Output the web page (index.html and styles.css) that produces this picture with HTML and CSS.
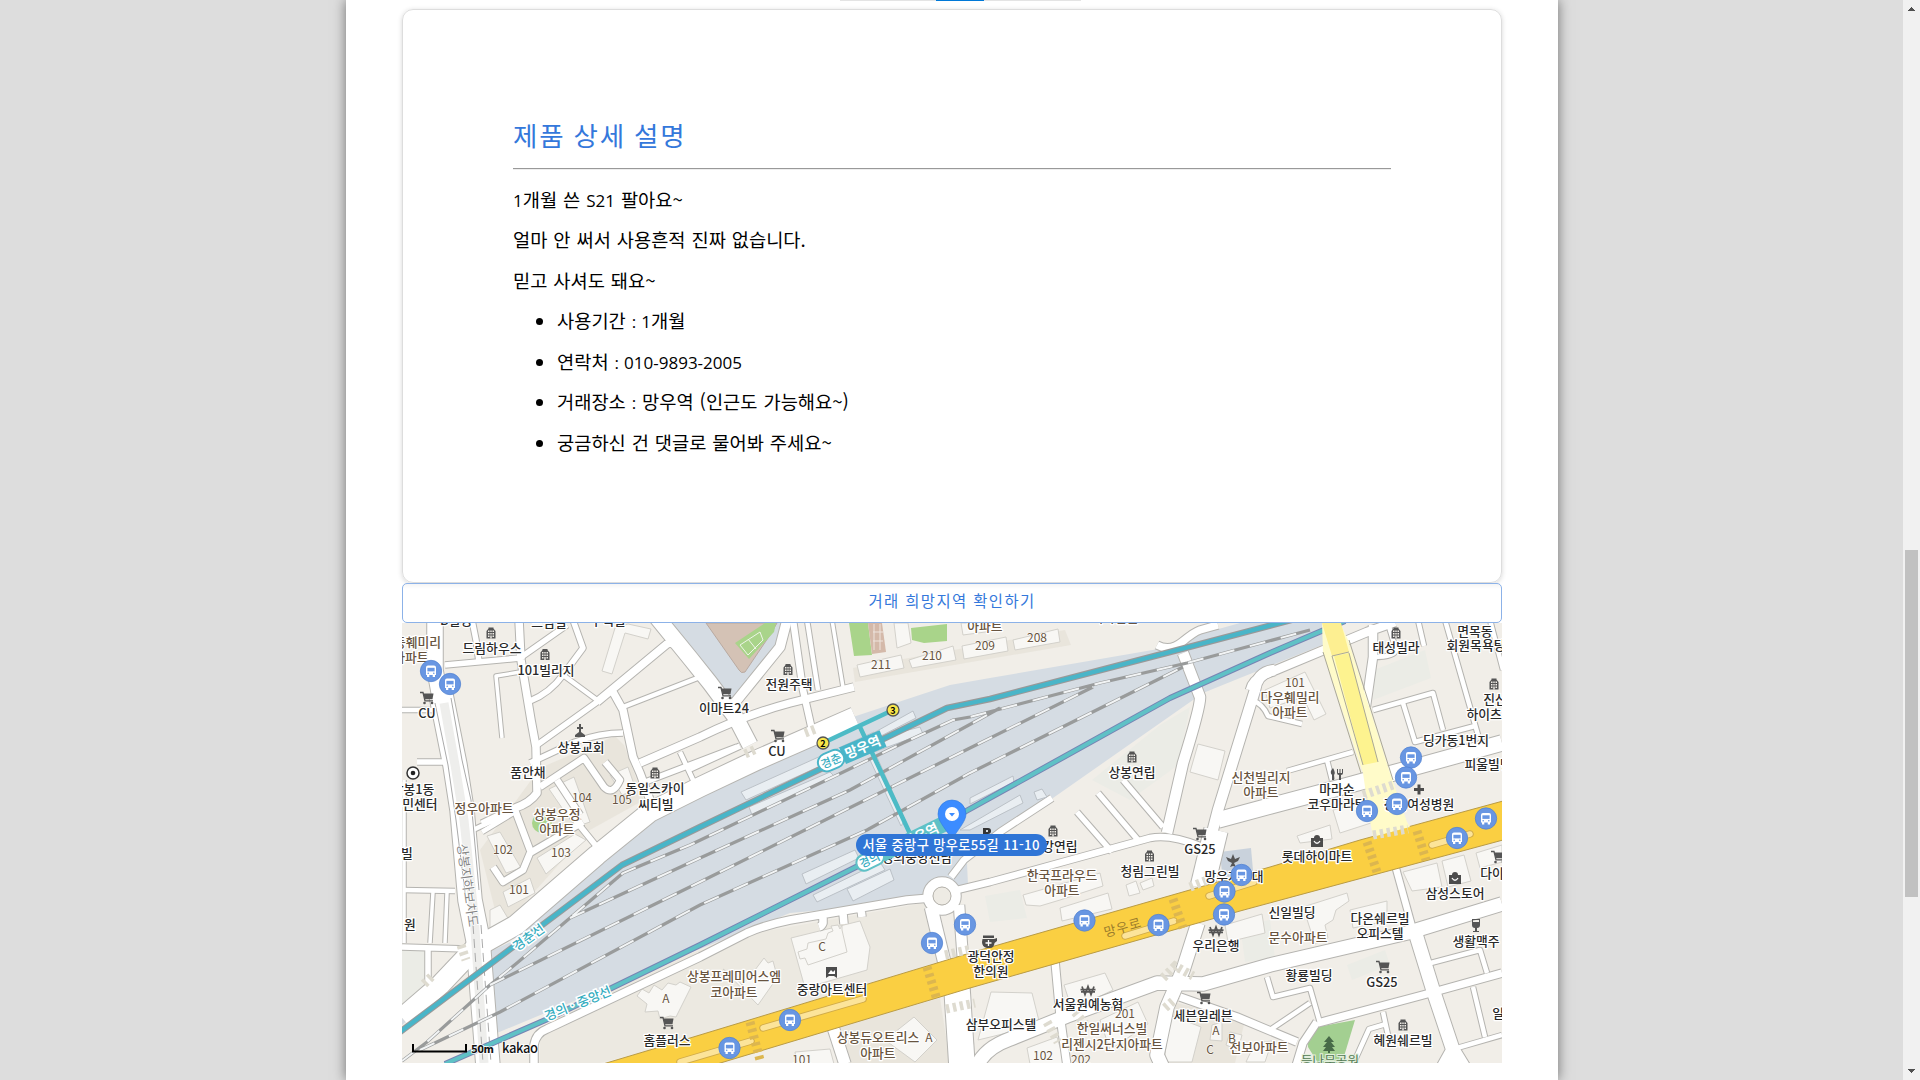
FILE: index.html
```html
<!DOCTYPE html>
<html lang="ko">
<head>
<meta charset="utf-8">
<title>제품 상세 설명</title>
<link rel="stylesheet" href="styles.css">
</head>
<body>
<div class="viewport">
<main class="page">
  <div class="tabs"><span class="tab-active"></span></div>
  <section class="card">
    <h2>제품 상세 설명</h2>
    <hr>
    <p><span class="num">1</span>개월 쓴 <span class="num">S21</span> 팔아요~</p>
    <p>얼마 안 써서 사용흔적 진짜 없습니다.</p>
    <p>믿고 사셔도 돼요~</p>
    <ul>
      <li>사용기간 <span class="num">: 1</span>개월</li>
      <li>연락처 <span class="num">: 010-9893-2005</span></li>
      <li>거래장소 <span class="num">:</span> 망우역 (인근도 가능해요~)</li>
      <li>궁금하신 건 댓글로 물어봐 주세요~</li>
    </ul>
  </section>
  <button class="area-btn" type="button">거래 희망지역 확인하기</button>
  <svg class="map" viewBox="402 623 1100 440" width="1100" height="440">
    <defs>
      <symbol id="bus" viewBox="-12 -12 24 24" overflow="visible">
        <circle r="10.7" fill="#6896e2" stroke="#4f7fd0" stroke-width=".7"/>
        <path d="M-5 4V-3.5Q-5-5.5-3-5.5H3Q5-5.5 5-3.5V4ZM-4 4h2.3v2H-4ZM1.7 4H4v2H1.7Z" fill="#fff"/>
        <path d="M-3.6-3.2h7.2v3.6h-7.2Z" fill="#6896e2"/><circle cx="-2.8" cy="2.2" r=".8" fill="#6896e2"/><circle cx="2.8" cy="2.2" r=".8" fill="#6896e2"/>
      </symbol>
      <symbol id="bld" viewBox="-6 -6 12 12" overflow="visible">
        <path d="M-4.5 5.5V-2L-2.5-4.5V-5.5H2.5V-4.5L4.500-2V5.500Z" fill="#555"/>
        <path d="M-3-2.500h1.500v1.500H-3ZM-.7-2.500H.7V-1H-.7ZM1.500-2.500H3V-1H1.500ZM-3 0h1.500v1.500H-3ZM-.7 0H.7v1.500H-.7ZM1.500 0H3v1.500H1.500ZM-3 2.500h1.500V4H-3ZM-.7 2.500H.7v3H-.7ZM1.500 2.500H3V4H1.500Z" fill="#f1eee8"/>
      </symbol>
      <symbol id="cart" viewBox="-7 -7 14 14" overflow="visible">
        <path d="M-7-5.500h3L-2 2.800H6" fill="none" stroke="#555" stroke-width="1.300"/>
        <path d="M-3.800-4.500H6.500L5.500 1.200H-2.300Z" fill="#555"/><circle cx="-2.500" cy="5" r="1.300" fill="#555"/><circle cx="5" cy="5" r="1.300" fill="#555"/>
      </symbol>
      <symbol id="bag" viewBox="-6 -6 12 12" overflow="visible">
        <path d="M-6-3H6V6H-6ZM-3-3Q-3-6 0-6T3-3" fill="#4c4c4c"/><path d="M-3 0Q0 4.500 3 0" fill="none" stroke="#fff" stroke-width="1.300"/>
      </symbol>
      <symbol id="won" viewBox="-7 -5 14 10" overflow="visible">
        <path d="M-6-4L-3 4L0-4L3 4L6-4M-7.500-.8H7.500M-7 1.300H7" fill="none" stroke="#555" stroke-width="1.700"/>
      </symbol>
      <g id="streets" class="streets">
        <path class="w16" d="M435 618V670L440 697"/>
        <path class="w24" d="M441 695L455 765L462 810L470 900L478 940L488 1066"/>
        <path class="w6" d="M472 620L476 640L479 662"/>
        <path class="w8" d="M519 620L521 660L531 720L536 747L537 793Q530 803 515 808L482 824"/>
        <path class="w6" d="M445 665L520 658L567 625M573 620L583 648L563 675Q550 693 530 701M537 745L597 702L667 643M530 763L575 742Q600 733 623 733"/>
        <path class="w5" d="M563 675L597 700M623 707L700 677M680 752L694 782M402 710H438M482 832L515 812M403 890L455 891M473 830L515 810"/>
        <path class="w8" d="M597 702L667 644Q675 640 682 654M613 692L623 710L633 757L640 773L650 800M640 763L700 737Q745 715 790 703L854 687"/>
        <path class="w6" d="M640 784L737 747M417 762H443M690 769L740 746M402 947L467 949M428 950V985M567 810L597 847"/>
        <path class="w4" d="M502 738L496 676L520 672M433 892L430 943M447 893L445 943M404 780V943M832 620L843 687"/>
        <path class="w7" d="M493 867L503 882L523 870L530 853L583 822M515 810L530 850M540 787L584 758L604 787Q613 796 620 780L605 762M557 780L580 815"/>
        <path class="w20" d="M402 1018L440 985L475 948L516 925L597 855L650 812L700 787L757 760L855 717"/>
        <path class="w16" d="M655 615L690 658L710 683L736 718L750 745"/>
        <path class="w10" d="M787 620L780 647L733 705"/>
        <path class="w7" d="M793 620L803 690L812 730"/>
        <path class="w5" d="M807 620L818 690"/>
        <path class="w8" d="M534 1064V1045Q536 1033 547 1029L700 957L747 933Q765 925 790 920L907 900L930 898M823 915V923Q822 926 819 927M843 913L844 924M861 909L862 917"/>
        <path class="w13" d="M931 907L945 965"/><path class="w11" d="M959 905L963 960"/>
        <path class="w7" d="M957 890L990 882L1070 860L1150 838Q1170 834 1200 846M951 877L964 860L1000 832L1052 798"/>
        <path class="w12" d="M833 1027L845 1064"/><path class="w26" d="M957 989L962 1066"/>
        <path class="w8" d="M1055 961L1060 1015L1067 1066"/>
        <path class="w14" d="M977 1066Q985 1048 1010 1039L1067 1016L1157 983L1203 984L1270 965L1407 933L1502 904M1198 923L1183 970L1167 1007L1157 1055L1162 1066"/>
        <path class="w8" d="M1180 997L1237 1017L1297 1042M1157 645Q1170 652 1182 642T1200 630L1218 625"/>
        <path class="w24" d="M1216 830L1202 888"/>
        <path class="w11" d="M1183 653L1200 697Q1201 705 1183 763L1167 833M1275 670Q1257 672 1255 690L1218 810L1209 845"/>
        <path class="w16" d="M1218 820L1270 806L1353 784L1393 773L1502 743"/>
        <path class="w9" d="M1250 690Q1252 680 1264 675L1367 632L1395 622M1373 625V657L1366 706"/>
        <path class="w6" d="M1077 812L1112 852M1098 793L1138 840M1123 780L1163 827"/>
        <path class="w5" d="M1373 657Q1395 657 1396 650L1387 620M1418 620L1424 646M1445 620L1478 735M1373 710L1433 693L1443 730M1403 703L1415 742L1475 726M1490 620L1503 670M1252 700Q1263 704 1268 716L1302 724M1287 771L1353 752M1327 760L1332 780"/>
        <path class="w7" d="M1395 865L1413 930"/><path class="w14" d="M1413 925L1433 990L1453 1050L1443 1068M1453 1050L1464 1068"/>
        <path class="w5" d="M1267 977L1273 997L1310 988L1320 1023M1270 1030L1310 1003M1383 1012L1389 1040M1386 1024L1369 1029L1355 1060M1427 964L1480 950L1487 973M1473 987L1485 1037M1457 1048L1502 1035"/>
        <path class="w8" d="M1318 1023L1423 995L1502 973M1317 1022L1303 1043L1296 1066"/>
        <circle class="w10" cx="942" cy="896" r="14"/>
      </g>
      <g id="rails"><path d="M402 1061L427 1042L490 985L517 963L623 873L690 845L833 777L903 743L953 720L970 717L1100 683L1187 663L1310 630M570 918L700 858L850 790L1000 708M490 985L700 882L805 830L970 748L1093 687M420 1050L500 1012L700 905L867 830L970 773L1183 667"/></g>
    </defs>
    <rect x="402" y="623" width="1100" height="440" fill="#f1eee8"/>
    <g fill="#ebece6"><path d="M1374 670L1425 650L1431 678L1373 700ZM1092 780L1160 725L1190 707L1178 765L1130 800ZM1240 925L1270 920L1275 958L1245 962ZM1347 965L1385 950L1390 965L1352 980ZM402 950L425 950L425 985L402 1010ZM985 896L1020 890L1027 918L990 922Z"/></g>
    <g fill="#e5e1d8"><path d="M540 768L615 736L624 745L644 800L590 830L500 930L480 850ZM853 668L1065 630L1071 645L855 682ZM835 1028L940 998L950 1063H848ZM1165 1000L1245 1020L1235 1063H1165Z" opacity=".75"/></g>
    <path d="M590 984L760 932L930 902L945 960L690 1040L600 1063H540V1035Z" fill="#ece9e1"/>
    <path d="M402 1016L437 985L467 950L487 953L515 940L552 907L600 863L648 822L700 798L740 777L787 758L853 717L950 685L990 678L1170 647L1190 637L1240 623H1340L1327 643L1240 678L1203 693L1053 798L1000 833L967 863L968 885L913 902L790 913L690 953L497 1033L487 953L402 1025Z" fill="#d5dce3"/>
    <path d="M657 623H787L773 655L730 715Z" fill="#d5dce3"/>
    <path d="M706 623H777L770 635L745 672Q741 674 739 670Z" fill="#d4c2b5" stroke="#b8a9a0"/>
    <path d="M735 643L765 623H776L774 632L749 659Z" fill="#a9d48a"/><path d="M740 645L760 632L763 640L748 655ZM748 639L756 649" fill="none" stroke="#eff5e9"/>
    <path d="M849 623H868L872 655L854 656ZM911 628L947 624V641L924 643L912 640Z" fill="#a9d48a"/>
    <path d="M868 623H882L886 652L872 654Z" fill="#d4b9a9"/><path d="M874 624V650M880 624V650M873 632H883M873 641H883" stroke="#eee4dd"/>
    <g class="building">
      <path d="M857 665L901 655L904 668L860 677ZM909 660L953 646L956 660L912 668ZM962 646L1006 637L1008 651L964 659ZM1013 640L1058 629L1060 642L1015 650Z"/>
      <path d="M615 628L628 624L651 629L648 639L625 633L612 674L602 671ZM961 623H1000V630L963 635ZM894 623H908L911 643L897 648Z"/>
      <path d="M549 789L574 777L590 822L575 827ZM610 775L628 767L636 790L622 795ZM487 836L500 832L521 868L506 873ZM503 892L530 878L535 893L508 907ZM537 858L575 834L586 840L546 874ZM490 910L500 905L509 920L490 928Z"/>
      <path d="M791 938L860 921L870 947L867 970L805 988Z"/>
      <path d="M798 952L807 949L808 943L826 939L828 933L833 931L831 926L838 925L840 929L842 925V930L847 952L808 965L805 958L800 959Z"/>
      <path d="M637 996L642 989L649 993L654 985L662 990L668 983L676 985L680 982L691 987L676 1017L670 1016L660 1019L658 1011L645 1012L647 1004Z"/>
      <path d="M723 969L735 977L742 985L755 970L764 958L768 963L773 961L776 972L779 975L758 1005Z"/>
      <path d="M885 1040L914 1017L937 1040L915 1062ZM795 1052L830 1049L834 1064H797ZM978 1040L991 992L1032 993L1040 1025ZM1064 985L1105 973L1113 990L1072 1010ZM1027 1048L1057 1037L1065 1064H1030ZM1100 1020L1138 1002L1148 1024L1110 1050Z"/>
      <path d="M1023 895L1100 873L1103 886L1060 900L1040 906L1026 905ZM1060 908L1108 893L1112 909L1062 921ZM1126 885L1136 881L1140 893L1129 896ZM1140 883L1152 878L1154 886L1143 890ZM1198 744L1225 751L1218 780L1190 772Z"/>
      <path d="M1265 690L1305 672L1326 714L1314 720L1303 697L1270 708ZM1333 810L1363 803L1374 822L1340 833ZM1297 836L1330 825L1332 839L1300 843ZM1403 872L1437 863L1442 887L1412 891ZM1442 861L1464 855L1471 881L1448 887ZM1476 853L1502 845V862L1480 868ZM1303 907L1347 893L1349 901L1336 910L1333 920L1325 925L1328 938L1315 944ZM1225 925L1262 914L1265 933L1228 942ZM1350 910L1387 901V921L1353 928Z"/>
      <path d="M1170 1015L1201 1027L1192 1062H1164ZM1212 1025L1222 1022V1041L1210 1040ZM1230 1032L1242 1035L1238 1050L1226 1045ZM1255 1043L1272 1041L1265 1062H1246Z"/>
    </g>
    <circle cx="542" cy="823" r="10" fill="#a9d48a"/>
    <path d="M1308 1037L1317 1027L1355 1020L1342 1063H1318L1308 1047Z" fill="#a3cf91"/>
    <path d="M1220 852L1251 848L1254 882L1223 884Z" fill="#c9d2dc"/>
    <use href="#streets" class="street-edge"/><use href="#streets" class="street-fill"/>
    <circle cx="942" cy="896" r="9" fill="#eeebe4" stroke="#b8b5ae"/>
    <path d="M444 703L455 765L464 820L474 915L484 1063" fill="none" stroke="#eeeeec" stroke-width="9"/>
    <path d="M435 703L448 765L456 820L466 900M451 698L462 760L471 800L479 890" fill="none" stroke="#aaa"/>
    <path d="M473 925L483 1063M481 925L491 1063" fill="none" stroke="#aaa" stroke-dasharray="9 5"/>
    <g class="platform"><path d="M741 792L874 732L877 740L746 800ZM749 807L830 772L834 776L752 815ZM832 756L913 711L916 718L840 757ZM870 740L920 727L923 734L874 752ZM870 760L877 757L905 820L901 826ZM802 874L855 850L859 858L806 884ZM813 895L880 862L885 870L817 902ZM847 889L890 869L894 880L853 901ZM970 798L1013 776L1014 782L970 804ZM960 830L1020 795L1023 803L970 830ZM1034 792L1042 789L1047 797L1037 800Z"/></g>
    <use href="#rails" class="rail-base"/><use href="#rails" class="rail-dash"/>
    <g class="lines">
      <path d="M400 1032L622 865L700 827L877 742L947 708L990 699L1170 652L1295 619" stroke="#999" stroke-width="6.500"/>
      <path d="M400 1032L622 865L700 827L877 742L947 708L990 699L1170 652L1295 619" stroke="#49b5c8" stroke-width="4.300"/>
      <path d="M445 1064L550 1018L700 945L860 865L950 820L1170 698L1270 653L1345 621" stroke="#7784b4" stroke-width="6"/>
      <path d="M445 1064L550 1018L700 945L860 865L950 820L1170 698L1270 653L1345 621" stroke="#5fc1c6" stroke-width="4"/>
      <path d="M823 743L893 710M860 727L912 838" stroke="#4dbbc6" stroke-width="4.500"/>
    </g>
    <path d="M603 1064L690 1038L970 953L1270 867L1360 840L1503 801V840L1240 911L970 988L717 1064Z" fill="#facf42" stroke="#b99b45"/>
    <g fill="none" stroke-linecap="round" stroke="#d0ab49" stroke-width="7.500"><path d="M763 1028L863 999M680 1062L751 1041M1125 936L1174 921M1209 896L1254 882M1432 845L1470 834"/><g stroke="#fce49a" stroke-width="5.500"><path d="M763 1028L863 999M680 1062L751 1041M1125 936L1174 921M1209 896L1254 882M1432 845L1470 834"/></g></g>
    <path d="M1322 623H1340L1348 640L1390 773L1407 822L1410 827L1373 837L1369 815L1363 773L1323 652Z" fill="#fffbc9"/>
    <path d="M1322 623H1341L1349 652L1332 656Z" fill="#fdef91"/><path d="M1334 656L1349 653L1378 762L1363 765Z" fill="#fdf38f"/>
    <path d="M1323 652L1361 773M1349 640L1393 780M1332 656L1363 765M1349 653L1378 762M1332 656L1349 652" stroke="#aaa896" fill="none"/>
    <g class="cross"><path d="M750 1022L760 1060M927 967L937 1000M1173 899L1183 928M1367 842L1377 872M1417 831L1426 860" stroke="#dcb64f"/><path d="M945 955L972 949M946 1009L975 1003M1190 887L1210 879M1047 1022L1058 1042M1075 1012L1085 1024M1163 978L1175 966L1193 976M1165 1008L1174 1000M461 945L466 960M424 984L432 976M805 733L818 728M745 754L756 749M1363 795L1393 785M1373 835L1408 829" stroke="#dedbd0"/></g>

    <g class="poi">
      <text x="456" y="625">B빌딩</text><text x="549" y="627">드림빌</text><text x="608" y="625">주택빌</text>
      <text x="492" y="653">드림하우스</text><text x="546" y="675">101빌리지</text><text x="427" y="718">CU</text><text x="581" y="752">상봉교회</text><text x="528" y="777">품안채</text>
      <text x="655" y="793">동일스카이</text><text x="656" y="809">씨티빌</text><text x="413" y="794">상봉1동</text><text x="414" y="809">주민센터</text><text x="407" y="858">빌</text><text x="410" y="929">원</text>
      <text x="789" y="689">전원주택</text><text x="724" y="713">이마트24</text><text x="777" y="756">CU</text><text x="667" y="1045">홈플러스</text><text x="832" y="994">중랑아트센터</text>
      <text x="991" y="961">광덕안정</text><text x="991" y="975.500">한의원</text><text x="1001" y="1029">삼부오피스텔</text><text x="1132" y="777">상봉연립</text><text x="1060" y="851">강연립</text><text x="1200" y="854">GS25</text>
      <text x="1150" y="876">청림그린빌</text><text x="1234" y="881">망우지구대</text><text x="1216" y="950">우리은행</text><text x="1088" y="1009">서울원예농협</text><text x="1203" y="1020">세븐일레븐</text>
      <text x="1396" y="652">태성빌라</text><text x="1475" y="636">면목동</text><text x="1476" y="650">회원목욕탕</text><text x="1501" y="704">진산하</text><text x="1490" y="719">하이츠빌</text><text x="1456" y="745">딩가동1번지</text><text x="1488" y="769">피울빌딩</text>
      <text x="1337" y="794">마라순</text><text x="1337" y="809">코우마라탕</text><text x="1419" y="809">강북여성병원</text><text x="1317" y="861">롯데하이마트</text><text x="1292" y="917">신일빌딩</text><text x="1380" y="923">다온쉐르빌</text><text x="1380" y="938">오피스텔</text>
      <text x="1455" y="898">삼성스토어</text><text x="1498" y="878">다이소</text><text x="1476" y="946">생활맥주</text><text x="1309" y="980">황룡빌딩</text><text x="1382" y="987">GS25</text><text x="1403" y="1045">혜원쉐르빌</text><text x="1504" y="1018">일등</text>
      <text x="917" y="862">경의중앙선남</text>
    </g>
    <g class="poi apt">
      <text x="417.500" y="647">동훼미리</text><text x="411" y="662">아파트</text><text x="484" y="813">정우아파트</text><text x="557" y="819">상봉우정</text><text x="557" y="834">아파트</text>
      <text x="985" y="631">아파트</text><text x="1115" y="622">기사님들</text><text x="1290" y="702">다우훼밀리</text><text x="1290" y="717">아파트</text><text x="1261" y="782">신천빌리지</text><text x="1261" y="797">아파트</text>
      <text x="734" y="981">상봉프레미어스엠</text><text x="734" y="997">코아파트</text><text x="878" y="1042">상봉듀오트리스</text><text x="878" y="1058">아파트</text><text x="1062" y="880">한국프라우드</text><text x="1062" y="895">아파트</text>
      <text x="1112" y="1033">한일써너스빌</text><text x="1112" y="1049">리젠시2단지아파트</text><text x="1259" y="1052">천보아파트</text><text x="1298" y="942">문수아파트</text>
    </g>
    <g class="poi apt no">
      <text x="881" y="669">211</text><text x="932" y="660">210</text><text x="985" y="650">209</text><text x="1037" y="642">208</text><text x="1295" y="687">101</text><text x="582" y="802">104</text><text x="622" y="804">105</text><text x="503" y="854">102</text><text x="561" y="857">103</text><text x="519" y="894">101</text>
      <text x="666" y="1003">A</text><text x="822" y="951">C</text><text x="929" y="1042">A</text><text x="802" y="1064">101</text><text x="1125" y="1018">201</text><text x="1043" y="1060">102</text><text x="1081" y="1064">202</text><text x="1216" y="1035">A</text><text x="1232" y="1043">B</text><text x="1210" y="1054">C</text>
    </g>
    <text class="park" x="1330" y="1065">등나무공원</text>
    <g class="line-name"><text x="529" y="942" transform="rotate(-36 529 938)">경춘선</text><text x="578" y="1008" transform="rotate(-22 578 1004)">경의ㆍ중앙선</text></g>
    <text class="road-name" transform="translate(463 886) rotate(82)">상봉지하보차도</text>
    <text class="road-name main" x="1123" y="932" transform="rotate(-16 1123 928)">망우로</text>
    <g transform="rotate(-23 849 753)"><path d="M842 744H886V762H842Z" fill="#49b5c8"/><rect x="816" y="744" width="27" height="18" rx="9" fill="#fff" stroke="#49b5c8" stroke-width="2"/><text x="829.500" y="757.500" class="station mini">경춘</text><text x="864" y="758" class="station">망우역</text></g>
    <g transform="rotate(-26 925 832)"><path d="M876 825H945V841H876Z" fill="#5fc1c6"/><rect x="849" y="825" width="29" height="16" rx="8" fill="#fff" stroke="#5fc1c6" stroke-width="2"/><text x="863" y="837" class="station mini">경의</text><text x="920" y="838" class="station">망우역</text></g>
    <g class="exit"><circle cx="823" cy="743" r="6"/><text x="823" y="746.500">2</text><circle cx="893" cy="710" r="6"/><text x="893" y="713.500">3</text></g>
    <g>
      <use href="#bld" x="485" y="627" width="12" height="12"/><use href="#bld" x="539" y="648.500" width="12" height="12"/><use href="#bld" x="649" y="767" width="12" height="12"/><use href="#bld" x="782" y="663.500" width="12" height="12"/><use href="#bld" x="1126" y="751" width="12" height="12"/><use href="#bld" x="1047" y="825" width="12" height="12"/><use href="#bld" x="1143.500" y="850" width="12" height="12"/><use href="#bld" x="1390" y="627" width="12" height="12"/><use href="#bld" x="1488" y="678" width="12" height="12"/><use href="#bld" x="1397" y="1019" width="12" height="12"/>
      <use href="#cart" x="420" y="691" width="14" height="14"/><use href="#cart" x="718" y="686" width="14" height="14"/><use href="#cart" x="771" y="729" width="14" height="14"/><use href="#cart" x="660" y="1016" width="14" height="14"/><use href="#cart" x="1193" y="827" width="14" height="14"/><use href="#cart" x="1197" y="991" width="14" height="14"/><use href="#cart" x="1376" y="960" width="14" height="14"/><use href="#cart" x="1491" y="850" width="14" height="14"/>
      <use href="#bag" x="1311" y="835" width="12" height="12"/><use href="#bag" x="1449" y="872" width="12" height="12"/>
      <use href="#won" x="1209" y="926" width="14" height="10"/><use href="#won" x="1081" y="985.500" width="14" height="10"/>
      <path d="M579 724H581V727H583V729H581V732L585 735V737H575V735L579 732V729H577V727H579Z" fill="#555"/>
      <circle cx="413" cy="773" r="6" fill="#fff" stroke="#333" stroke-width="1.500"/><circle cx="413" cy="773" r="2.300" fill="#222"/>
      <path d="M826 967H837V978L834 976H829L826 978Z" fill="#4c4c4c"/><path d="M828 974L831 970L833 972L835 970V974Z" fill="#fff"/>
      <path d="M983 935.500H994V938H983ZM982.500 939H994L997 938V941L994.500 943Q994 948 990 948H987Q982 947 982 942Z" fill="#4c4c4c"/><path d="M988.500 940V946M985.500 943H991.500" stroke="#fff" stroke-width="1.300"/>
      <path d="M1417.500 784.500H1420.500V788H1424V791H1420.500V794.500H1417.500V791H1414V788H1417.500Z" fill="#4c4c4c"/>
      <path d="M1333 768Q1336 773 1334 775V780H1332V775Q1329 772 1333 768ZM1337 769V773Q1337 775 1339 775V780H1341V775Q1343 775 1343 773V769H1342V773H1340.500V769H1339.500V773H1338V769Z" fill="#555"/>
      <path d="M1233 854L1235 859L1240 857L1238 861L1234 863L1236 867L1233 866L1230 867L1232 863L1228 861L1226 857L1231 859Z" fill="#555"/>
      <path fill-rule="evenodd" d="M1472 919H1480V925Q1480 928 1477 928V931H1479V932H1473V931H1475V928Q1472 928 1472 925ZM1473 920V922H1479V920Z" fill="#555"/>
      <path d="M1329 1036L1334 1042H1331L1335 1047H1332L1335 1051H1330V1053H1328V1051H1323L1326 1047H1323L1327 1042H1324Z" fill="#486b48"/>
      <path fill-rule="evenodd" d="M983 828H988Q991 828 991 831T988 834H986V837H983ZM986 830V832H988V830Z" fill="#333"/>
    </g>
    <g>
      <use href="#bus" x="419" y="659" width="24" height="24"/><use href="#bus" x="438" y="672" width="24" height="24"/><use href="#bus" x="1399" y="745.500" width="24" height="24"/><use href="#bus" x="1394" y="765.500" width="24" height="24"/><use href="#bus" x="1385" y="792" width="24" height="24"/><use href="#bus" x="1355" y="799" width="24" height="24"/><use href="#bus" x="1474" y="806.500" width="24" height="24"/><use href="#bus" x="1445" y="826" width="24" height="24"/><use href="#bus" x="1229.500" y="863" width="24" height="24"/><use href="#bus" x="1212.500" y="879.500" width="24" height="24"/><use href="#bus" x="1212" y="902.500" width="24" height="24"/><use href="#bus" x="1072.500" y="908.500" width="24" height="24"/><use href="#bus" x="1146.500" y="913" width="24" height="24"/><use href="#bus" x="953" y="912.500" width="24" height="24"/><use href="#bus" x="920" y="931" width="24" height="24"/><use href="#bus" x="778" y="1008" width="24" height="24"/><use href="#bus" x="717.500" y="1036" width="24" height="24"/>
    </g>
    <path d="M938 814A14 14 0 0 1 966 814C966 822 957 830 952 840C947 830 938 822 938 814Z" fill="#3c8cff" stroke="#2e78df" stroke-width=".6"/><circle cx="952" cy="814" r="7" fill="#fff"/><path d="M949 813H955L952 816.500Z" fill="#3c8cff"/>
    <rect x="856" y="834" width="191" height="22" rx="11" fill="#2f75d6"/>
    <text class="address" x="951" y="849.500" textLength="177">서울 중랑구 망우로55길 11-10</text>
    <path d="M413 1044V1051.500H466V1044" fill="none" stroke="#000" stroke-width="2"/>
    <text class="scale" x="471" y="1053" textLength="23">50m</text><text class="brand" x="502" y="1053" textLength="36">kakao</text>
  </svg>
</main>
<aside class="scrollbar"><svg width="7" height="4"><path d="M3 0h1v1h1v1h1v1h1v1H0V3h1V2h1V1h1Z" fill="#505050"/></svg><i class="thumb"></i><svg width="7" height="4"><path d="M0 0h7v1H6v1H5v1H4v1H3V3H2V2H1V1H0Z" fill="#505050"/></svg></aside>
</div>
</body>
</html>
```
FILE: styles.css
```css
* { box-sizing: border-box; }
body {
  margin: 0;
  background: #ddd;
  color: #000;
  font-family: "Noto Sans CJK KR", sans-serif;
}
.viewport {
  display: grid;
  grid-template-columns: 343px 1212px 1fr 17px;
  padding-left: 3px;
  height: 1080px;
  overflow: hidden;
}
.page {
  grid-column: 2;
  display: flex;
  flex-direction: column;
  padding: 0 56px;
  background: #fff;
  box-shadow: 0 0 12px rgba(0, 0, 0, .5);
}
.tabs {
  display: flex;
  justify-content: center;
  align-self: center;
  width: 241px;
  height: 1px;
  margin-left: 16px;
  margin-bottom: 8px;
  background: #e4e4e4;
}
.tab-active { width: 48px; background: #0078d7; }
.card {
  height: 574px;
  padding: 102px 110px 0;
  border: 1px solid #ddd;
  border-radius: 11px;
  box-shadow: 0 1px 5px rgba(0, 0, 0, .16);
  font-size: 18.7px;
  word-spacing: .7px;
}
.card h2 {
  margin: 0;
  font-size: 26.5px;
  font-weight: 400;
  line-height: 46px;
  letter-spacing: 1.9px;
  word-spacing: -1.4px;
  color: #3478db;
}
.card hr {
  height: 2px;
  margin: 10px 0 8.6px;
  border: 0;
  border-top: 1px solid #999;
  border-bottom: 1px solid #eee;
}
.card p, .card li { margin: 0; height: 40.55px; line-height: 40.55px; }
.card ul { margin: 0; padding-left: 44px; }
.num { font-family: "Open Sans", "Noto Sans", sans-serif; font-size: 17px; line-height: 1; }
.area-btn {
  height: 40px;
  padding: 0 0 7px;
  border: 1px solid #8cb2e8;
  border-radius: 5px;
  background: linear-gradient(#f5f5f5, #fff 5px);
  color: #3478db;
  font: 400 15.4px "Noto Sans CJK KR", sans-serif;
  letter-spacing: 1.4px;
}
.map { display: block; flex: none; overflow: hidden; }

.streets path, .streets circle { fill: none; stroke-linejoin: round; stroke-width: calc(var(--w) + var(--edge)); }
.street-edge { --edge: 1.5px; stroke: #b5b4b0; }
.street-fill { --edge: -.5px; stroke: #fff; }
.w4 { --w: 4px; } .w5 { --w: 5px; } .w6 { --w: 6px; } .w7 { --w: 7px; }
.w8 { --w: 8px; } .w9 { --w: 9px; } .w10 { --w: 10px; } .w11 { --w: 11px; }
.w12 { --w: 12px; } .w13 { --w: 13px; } .w14 { --w: 14px; } .w16 { --w: 16px; }
.w20 { --w: 20px; } .w24 { --w: 24px; } .w26 { --w: 26px; }
.building path { fill: #f8f7f4; stroke: #d3d1cb; }
.platform path { fill: #e9eef2; stroke: #bbc1c7; }
.rail-base { fill: none; stroke: #999b9b; stroke-width: 3.2px; }
.rail-dash { fill: none; stroke: #f2f4f5; stroke-width: 2px; stroke-dasharray: 16 16; }
.lines path { fill: none; stroke-linejoin: round; }
.cross path { fill: none; stroke-width: 9px; stroke-dasharray: 3.5 3.5; }

.map text { font-family: "Noto Sans CJK KR", sans-serif; text-anchor: middle; }
.poi text {
  fill: #292929;
  font-size: 12.8px;
  font-weight: 500;
  stroke: #fff;
  stroke-width: 2.5px;
  stroke-linejoin: round;
  paint-order: stroke;
}
.apt text { fill: #685440; }
.no text { font-size: 12px; font-weight: 400; stroke-width: 1px; }
.map .park { fill: #527853; font-size: 12.6px; stroke: #e3f0dd; stroke-width: 2px; paint-order: stroke; }
.line-name text { fill: #35adbf; font-size: 12.8px; font-weight: 500; stroke: #fff; stroke-width: 3px; paint-order: stroke; }
.map .road-name { fill: #858585; font-size: 13px; stroke: #fff; stroke-width: 1.5px; paint-order: stroke; }
.map .main { fill: #9b7c2c; stroke: none; letter-spacing: 1px; }
.map .station { fill: #fff; font-size: 13.5px; font-weight: 700; }
.map .mini { fill: #35adbf; font-size: 11.5px; font-weight: 500; }
.exit circle { fill: #f8e64a; stroke: #555; stroke-width: 1.3px; }
.exit text { font-size: 9px; font-weight: 700; }
.map .address { fill: #fff; font-size: 13.2px; font-weight: 500; }
.map .scale, .map .brand { text-anchor: start; fill: #111; stroke: #fff; stroke-width: 1.5px; paint-order: stroke; }
.map .scale { font: 700 10px "DejaVu Sans", sans-serif; }
.map .brand { font: 500 13px "Noto Sans CJK KR", sans-serif; }

.scrollbar {
  grid-column: 4;
  display: flex;
  flex-direction: column;
  align-items: center;
  justify-content: space-between;
  padding: 7px 0;
  background: #f1f1f1;
}
.thumb { width: 13px; height: 347px; margin-top: 367px; background: #c1c1c1; }
```
